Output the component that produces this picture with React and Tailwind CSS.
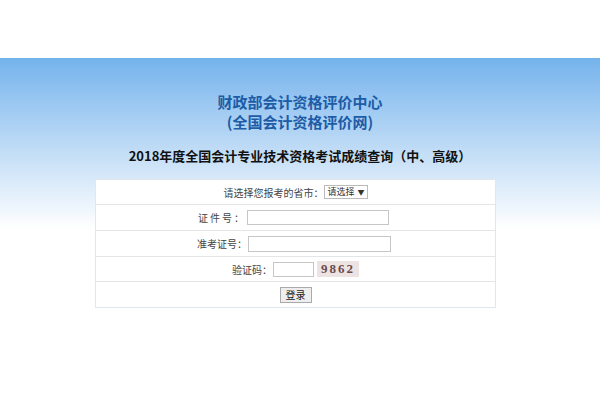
export default function App() {
  const cjk = { fontFamily: '"Microsoft YaHei", "Noto Sans CJK SC", sans-serif' };

  return (
    <div className="w-[600px] h-[400px] bg-white overflow-hidden" style={cjk}>
      {/* white strip on top */}
      <div className="h-[58px] bg-white" />

      {/* blue header fading to white, table sits on the fade */}
      <div className="h-[342px] bg-gradient-to-b from-[#74b3ec] via-[#c9e1f7] via-30% to-white to-50% pt-[34px]">
        <div className="text-center text-[#1d5ca6] font-bold text-[15px] leading-[20px]">
          <div>财政部会计资格评价中心</div>
          <div>(全国会计资格评价网)</div>
        </div>
        <div className="mt-[15px] text-center text-[#111] font-bold text-[13px] leading-[18px]">
          2018年度全国会计专业技术资格考试成绩查询（中、高级）
        </div>

        {/* form table */}
        <div className="mt-[14px] ml-[95px] w-[401px] border border-[#dfe8ec] bg-white text-[10px] text-[#444]">
          <div className="h-[25px] flex items-center justify-center border-b border-[#e2e6e8]">
            <span>请选择您报考的省市：</span>
            <span className="ml-[1px] h-[14px] px-[2px] flex items-center gap-[3px] border border-[#bbb] bg-white text-[9px] text-[#333]">
              请选择
              <span className="text-[7px] leading-none">▼</span>
            </span>
          </div>
          <div className="h-[26px] flex items-center border-b border-[#e2e6e8]">
            <span className="w-[150px] text-right tracking-[2px]">证件号：</span>
            <span className="ml-[1px] w-[142px] h-[15px] border border-[#c6c6c6]" />
          </div>
          <div className="h-[26px] flex items-center border-b border-[#e2e6e8]">
            <span className="w-[151px] text-right">准考证号：</span>
            <span className="ml-[1px] w-[143px] h-[16px] border border-[#c6c6c6]" />
          </div>
          <div className="h-[25px] flex items-center border-b border-[#e2e6e8]">
            <span className="w-[176px] text-right">验证码：</span>
            <span className="ml-[1px] w-[41px] h-[15px] border border-[#c6c6c6]" />
            <span
              className="ml-[3px] w-[42px] h-[16px] bg-[#ede3e3] text-[#6b4a4a] text-[13px] leading-[16px] tracking-[2px] text-center font-bold"
              style={{ fontFamily: '"Liberation Serif", serif' }}
            >
              9862
            </span>
          </div>
          <div className="h-[25px] flex items-center justify-center">
            <span className="h-[16px] px-[5px] flex items-center border border-[#aaa] bg-[#eee] text-[10px] text-[#222]">
              登录
            </span>
          </div>
        </div>
      </div>
    </div>
  );
}
